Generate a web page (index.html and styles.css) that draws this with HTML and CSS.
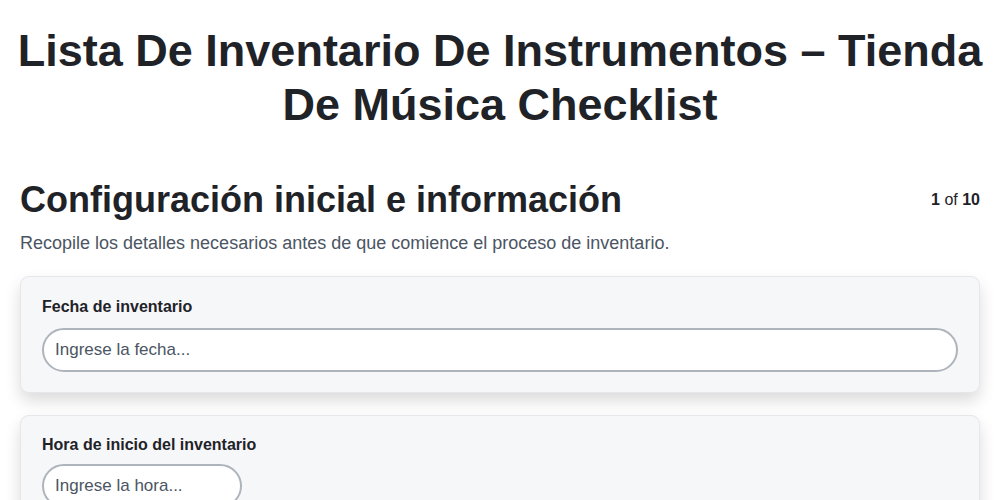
FILE: index.html
```html
<!DOCTYPE html>
<html lang="es">
<head>
<meta charset="utf-8">
<title>Checklist</title>
<link rel="stylesheet" href="styles.css">
</head>
<body>
<main class="page">
  <h1 class="title">Lista De Inventario De Instrumentos – Tienda De Música Checklist</h1>
  <section class="step">
    <div class="step-head">
      <h2 class="step-title">Configuración inicial e información</h2>
      <div class="step-count"><b>1</b> of <b>10</b></div>
    </div>
    <p class="step-desc">Recopile los detalles necesarios antes de que comience el proceso de inventario.</p>
    <div class="fields">
      <div class="card">
        <label class="label">Fecha de inventario</label>
        <input class="input" type="text" placeholder="Ingrese la fecha...">
      </div>
      <div class="card card-tight">
        <label class="label">Hora de inicio del inventario</label>
        <input class="input input-short" type="text" placeholder="Ingrese la hora...">
      </div>
    </div>
  </section>
</main>
</body>
</html>
```
FILE: styles.css
```css
* { box-sizing: border-box; }
body {
  margin: 0;
  font-family: "Liberation Sans", Arial, sans-serif;
  color: #1f2328;
  background: #ffffff;
}
.page {
  padding: 24px 20px 20px;
}
.title {
  margin: 0 -10px 46px;
  font-size: 45px;
  line-height: 54px;
  font-weight: 700;
  text-align: center;
  color: #1f2328;
}
.step-head {
  display: flex;
  justify-content: space-between;
  align-items: flex-start;
}
.step-title {
  margin: 0;
  font-size: 36px;
  line-height: 44px;
  font-weight: 700;
}
.step-count {
  font-size: 16px;
  padding-top: 13px;
  color: #1f2328;
}
.step-desc {
  margin: 11px 0 22px;
  font-size: 18px;
  line-height: 21px;
  color: #4b5563;
}
.fields {
  display: flex;
  flex-direction: column;
  gap: 22px;
}
.card {
  background: #f6f7f9;
  border: 1px solid #e5e7eb;
  border-radius: 9px;
  padding: 20px 21px 20px;
  box-shadow: 0 8px 16px rgba(0,0,0,0.14);
  display: flex;
  flex-direction: column;
  gap: 12px;
}
.card-tight {
  padding-top: 19px;
  gap: 10px;
}
.label {
  font-size: 16px;
  line-height: 19px;
  font-weight: 700;
  color: #1f2328;
}
.input {
  width: 100%;
  height: 44px;
  border: 2px solid #adb4bc;
  border-radius: 22px;
  padding: 0 11px;
  font-family: "Liberation Sans", Arial, sans-serif;
  font-size: 17px;
  color: #1f2328;
  background: #fff;
}
.input::placeholder { color: #4b5563; }
.input-short { width: 200px; }
```
